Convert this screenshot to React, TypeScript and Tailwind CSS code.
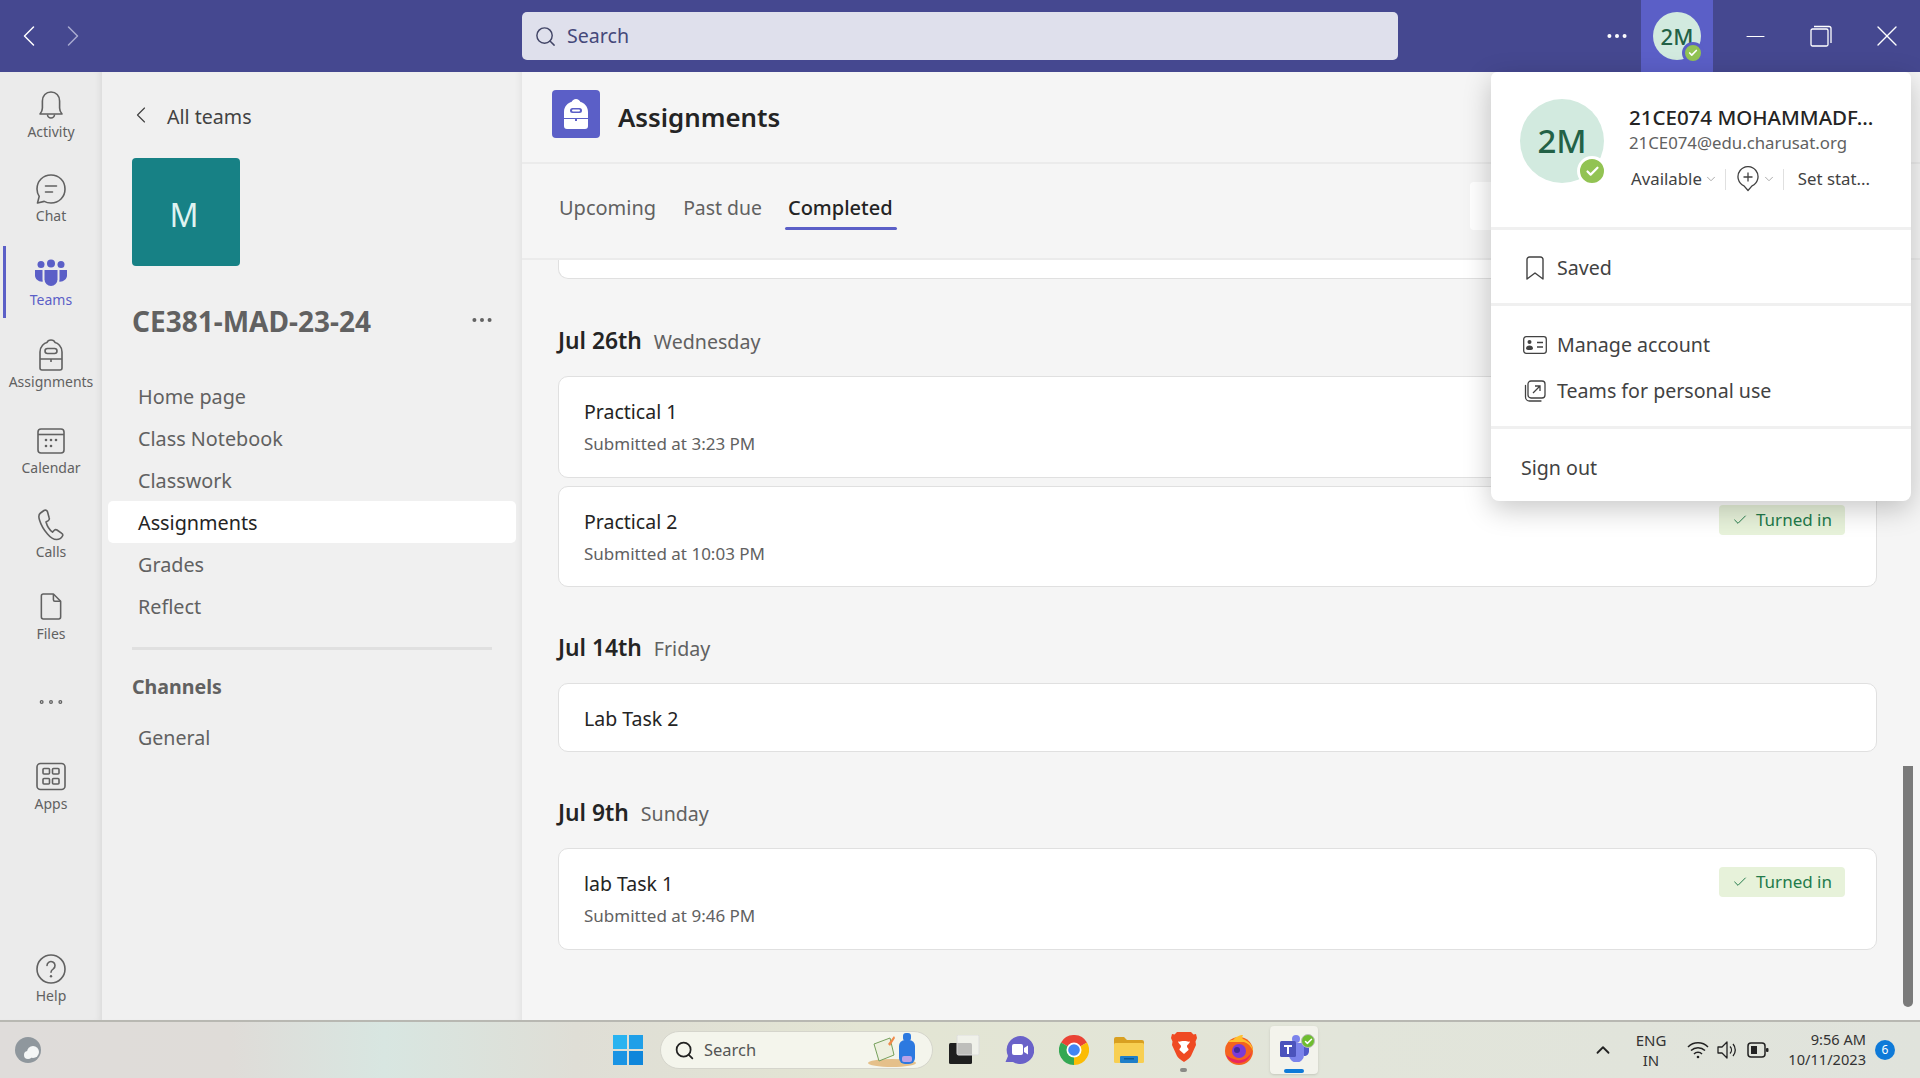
import React from "react";
import { ChevronLeft, ChevronRight, ChevronDown, ChevronUp, Search, Minus, X, Check, Ellipsis } from "lucide-react";

const stroke = "#616161";

const BellIcon = () => (
  <svg width="28" height="32" viewBox="0 0 28 32" fill="none" stroke={stroke} strokeWidth="1.6">
    <path d="M3 25c1.8-2 2.4-3.5 2.4-6v-7C5.400 6.500 9 3 14 3s8.600 3.500 8.600 9v7c0 2.500.6 4 2.400 6z" strokeLinejoin="round" />
    <path d="M10.500 25.500a3.500 3.500 0 0 0 7 0" />
  </svg>
);

const ChatIcon = () => (
  <svg width="32" height="32" viewBox="0 0 32 32" fill="none" stroke={stroke} strokeWidth="1.6">
    <path d="M16 2c8 0 14 6 14 14s-6 14-14 14c-2.500 0-4.800-.5-6.800-1.600L2.500 30l1.700-6.600A13.800 13.800 0 0 1 2 16C2 8 8 2 16 2z" strokeLinejoin="round" />
    <path d="M10.500 13h11M10.500 19h7" strokeLinecap="round" />
  </svg>
);

const TeamsIcon = () => (
  <svg width="32" height="28" viewBox="0 0 32 28" fill="#5b5fc7">
    <circle cx="16" cy="4.500" r="4" />
    <circle cx="6" cy="5.500" r="3.500" />
    <circle cx="26" cy="5.500" r="3.500" />
    <path d="M9.500 11h13v9.500a6.500 6.500 0 0 1-13 0z" />
    <path d="M0 11h7.500v9c0 1 .1 1.800.4 2.600C3.500 23 0 20 0 16.500z" />
    <path d="M32 11h-7.500v9c0 1-.1 1.800-.4 2.600 4.400.4 7.900-2.600 7.900-6.100z" />
  </svg>
);

const BagIcon = () => (
  <svg width="24" height="32" viewBox="0 0 24 32" fill="none" stroke={stroke} strokeWidth="1.6">
    <path d="M1 29V13C1 7 5.500 4 8 3.500 8.500 2 10 1 12 1s3.500 1 4 2.500C18.500 4 23 7 23 13v16a2 2 0 0 1-2 2H3a2 2 0 0 1-2-2z" strokeLinejoin="round" />
    <rect x="6" y="9.500" width="12" height="5" rx="2.500" />
    <path d="M1 20h22M12 20v3" />
  </svg>
);

const CalendarIcon = () => (
  <svg width="28" height="28" viewBox="0 0 28 28" fill="none" stroke={stroke} strokeWidth="1.6">
    <rect x="1" y="2" width="26" height="24" rx="3" />
    <path d="M1 7.500h26" />
    <g fill={stroke} stroke="none">
      <circle cx="9" cy="13" r="1.300" /><circle cx="14" cy="13" r="1.300" /><circle cx="19" cy="13" r="1.300" />
      <circle cx="9" cy="19" r="1.300" /><circle cx="14" cy="19" r="1.300" />
    </g>
  </svg>
);

const PhoneIcon = () => (
  <svg width="26" height="32" viewBox="0 0 26 32" fill="none" stroke={stroke} strokeWidth="1.6">
    <path d="M6 1.500 2.500 4C.5 5.500.5 8 1.500 11c1.500 5 4.500 10 8 14 2.500 3 5.500 5.500 9 5.500 2.500 0 5-1.500 6-3.500.5-1 .2-2-.7-2.600L19 21c-.9-.5-2-.4-2.700.3l-1.800 1.800C11.500 21 9 16.500 8 13l2.300-1.400c.9-.6 1.200-1.600.9-2.600L9.500 2.800C9.100 1.500 7.400.7 6 1.500z" strokeLinejoin="round" />
  </svg>
);

const FileIcon = () => (
  <svg width="22" height="27" viewBox="0 0 22 28" fill="none" stroke={stroke} strokeWidth="1.6">
    <path d="M3 1h10.500L21 8.500V25a2 2 0 0 1-2 2H3a2 2 0 0 1-2-2V3a2 2 0 0 1 2-2z" strokeLinejoin="round" />
    <path d="M13.500 1v6a1.500 1.500 0 0 0 1.500 1.500h6" />
  </svg>
);

const AppsIcon = () => (
  <svg width="30" height="29" viewBox="0 0 30 28" fill="none" stroke={stroke} strokeWidth="1.6">
    <rect x="1" y="1" width="28" height="26" rx="3.500" />
    <rect x="7" y="6" width="6.500" height="5.500" rx="1" />
    <rect x="16.500" y="6" width="6.500" height="5.500" rx="1" />
    <rect x="7" y="16" width="6.500" height="5.500" rx="1" />
    <rect x="16.500" y="16" width="6.500" height="5.500" rx="1" />
  </svg>
);

const HelpIcon = () => (
  <svg width="30" height="30" viewBox="0 0 30 30" fill="none" stroke={stroke} strokeWidth="1.6">
    <circle cx="15" cy="15" r="14" />
    <path d="M11 11.500a4 4 0 1 1 6.300 3.300c-1.500 1-2.300 1.700-2.300 3.400" strokeLinecap="round" />
    <circle cx="15" cy="22.300" r="1.200" fill={stroke} stroke="none" />
  </svg>
);

const railItems = [
  { label: "Activity", icon: <BellIcon /> },
  { label: "Chat", icon: <ChatIcon /> },
  { label: "Teams", icon: <TeamsIcon />, active: true },
  { label: "Assignments", icon: <BagIcon />, lift: true },
  { label: "Calendar", icon: <CalendarIcon /> },
  { label: "Calls", icon: <PhoneIcon /> },
  { label: "Files", icon: <FileIcon />, lift: true },
];

const RailItem = ({ label, icon, active, lift }: { label: string; icon: React.ReactNode; active?: boolean; lift?: boolean }) => (
  <div className={`relative flex h-[84px] flex-col items-center justify-center gap-[1px] ${lift ? "pb-[4px]" : ""}`}>
    {active && <span className="absolute left-[3px] top-[6px] h-[72px] w-[3px] bg-[#5b5fc7]" />}
    <div className="flex h-[34px] items-center">{icon}</div>
    <span className={`text-[14px] leading-[18px] ${active ? "text-[#5b5fc7]" : "text-[#616161]"}`}>{label}</span>
  </div>
);

const channelMenu = ["Home page", "Class Notebook", "Classwork", "Assignments", "Grades", "Reflect"];

const TurnedIn = () => (
  <div className="flex h-[30px] w-[126px] items-center justify-center gap-[8px] rounded-[4px] bg-[#e7f2da] text-[17px] text-[#237b4b]">
    <Check size={16} strokeWidth={1.5} />
    <span>Turned in</span>
  </div>
);

const AssignmentCard = ({ title, sub, done, className }: { title: string; sub?: string; done?: boolean; className: string }) => (
  <div className={`flex w-[1319px] justify-between rounded-[10px] border border-[#e0e0e0] bg-white pl-[25px] pr-[31px] ${className}`}>
    <div className="flex flex-col justify-center gap-[7px]">
      <p className="text-[19.500px] leading-[27px] text-[#242424]">{title}</p>
      {sub && <p className="text-[17px] leading-[24px] text-[#616161]">{sub}</p>}
    </div>
    {done && (
      <div className="pt-[18px]">
        <TurnedIn />
      </div>
    )}
  </div>
);

const DateHeading = ({ date, day, className }: { date: string; day: string; className: string }) => (
  <div className={`flex h-[35px] items-baseline gap-[12px] ${className}`}>
    <span className="text-[22.800px] font-semibold text-[#242424]">{date}</span>
    <span className="text-[19.600px] text-[#616161]">{day}</span>
  </div>
);

const PopupRow = ({ icon, label }: { icon: React.ReactNode; label: string }) => (
  <div className="flex h-[46px] items-center text-[19.600px] text-[#424242]">
    <div className="flex w-[66px] justify-center pl-[32px] pr-[10px]">{icon}</div>
    <span>{label}</span>
  </div>
);

const ProfilePopup = () => (
  <div className="absolute right-[9px] top-[72px] z-20 w-[420px] rounded-b-[8px] rounded-t-[6px] bg-white shadow-[0_8px_28px_rgba(0,0,0,0.22)]">
    <div className="flex h-[155px] pl-[29px] pt-[27px]">
      <div className="relative flex h-[84px] w-[84px] shrink-0 items-center justify-center rounded-full bg-[#d2eadf] text-[33px] font-medium text-[#236146]">
        2M
        <span className="absolute bottom-[-3px] right-[-3px] flex h-[30px] w-[30px] items-center justify-center rounded-full border-[3px] border-white bg-[#92c353]">
          <Check size={15} strokeWidth={3.500} className="text-white" />
        </span>
      </div>
      <div className="ml-[25px] flex flex-col pt-[4px]">
        <p className="text-[20.500px] font-medium leading-[28px] text-[#242424]">21CE074 MOHAMMADF...</p>
        <p className="text-[16.800px] leading-[24px] text-[#616161]">21CE074@edu.charusat.org</p>
        <div className="mt-[11px] flex items-center text-[16.800px] leading-[24px] text-[#424242]">
          <span className="pl-[2px]">Available</span>
          <ChevronDown size={14} strokeWidth={1.500} className="ml-[2px] text-[#a0a0a0]" />
          <span className="ml-[7px] h-[21px] w-px bg-[#e0e0e0]" />
          <svg width="22" height="26" viewBox="0 0 22 26" fill="none" stroke="#424242" strokeWidth="1.300" className="ml-[11px]">
            <path d="M11 24.500 7 19.800A10 10 0 1 1 15 19.800z" strokeLinejoin="round" />
            <path d="M11 6.500v9M6.500 11h9" />
          </svg>
          <ChevronDown size={14} strokeWidth={1.500} className="ml-[3px] text-[#a0a0a0]" />
          <span className="ml-[7px] h-[21px] w-px bg-[#e0e0e0]" />
          <span className="ml-[14px]">Set stat...</span>
        </div>
      </div>
    </div>
    <div className="h-[3px] bg-[#f0f0f0]" />
    <div className="flex h-[73px] items-center pt-[3px]">
      <PopupRow
        label="Saved"
        icon={
          <svg width="18" height="24" viewBox="0 0 18 24" fill="none" stroke="#424242" strokeWidth="1.400">
            <path d="M1 3.500A2.500 2.500 0 0 1 3.500 1h11A2.500 2.500 0 0 1 17 3.500V23l-8-6-8 6z" strokeLinejoin="round" />
          </svg>
        }
      />
    </div>
    <div className="h-[3px] bg-[#f0f0f0]" />
    <div className="flex h-[120px] flex-col justify-center pt-[4px]">
      <PopupRow
        label="Manage account"
        icon={
          <svg width="24" height="18" viewBox="0 0 24 18" fill="none" stroke="#424242" strokeWidth="1.300">
            <rect x=".7" y=".7" width="22.600" height="16.600" rx="2.500" />
            <circle cx="6.500" cy="6" r="2" fill="#424242" stroke="none" />
            <path d="M3 12.500c0-2 1.500-3 3.500-3s3.500 1 3.500 3-7 2-7 0z" fill="#424242" stroke="none" />
            <path d="M14 6.500h6M14 11h6" />
          </svg>
        }
      />
      <PopupRow
        label="Teams for personal use"
        icon={
          <svg width="22" height="22" viewBox="0 0 22 22" fill="none" stroke="#424242" strokeWidth="1.300">
            <rect x="4" y="1" width="17" height="17" rx="3" />
            <path d="M1.500 5.500V17a4 4 0 0 0 4 4H17" strokeLinecap="round" />
            <path d="M9 13l7-7M11 6h5v5" />
          </svg>
        }
      />
    </div>
    <div className="h-[3px] bg-[#f0f0f0]" />
    <div className="flex h-[72px] items-center pl-[30px] pt-[5px] text-[19.600px] text-[#424242]">Sign out</div>
  </div>
);

const TopBar = () => (
  <div className="flex h-[72px] shrink-0 items-center bg-[#454890]">
    <div className="flex w-[522px] items-center pl-[11px]">
      <ChevronLeft size={36} strokeWidth={1} className="text-white" />
      <ChevronRight size={36} strokeWidth={1} className="ml-[8px] text-[#a9abd0]" />
    </div>
    <div className="flex h-[48px] w-[876px] items-center gap-[10px] rounded-[5px] bg-[#dfe0ec] pl-[12px] text-[19.600px] text-[#45487a]">
      <Search size={23} strokeWidth={1.500} className="text-[#424566]" />
      <span>Search</span>
    </div>
    <div className="ml-auto flex h-full items-center">
      <Ellipsis size={26} strokeWidth={1.700} className="mr-[11px] text-white" />
      <div className="flex h-full w-[72px] items-center justify-center bg-[#5b5fc7]">
        <div className="relative flex h-[48px] w-[48px] items-center justify-center rounded-full bg-[#d2eadf] text-[22px] font-medium text-[#236146]">
          2M
          <span className="absolute bottom-[-4px] right-[-3px] flex h-[22px] w-[22px] items-center justify-center rounded-full border-[3px] border-[#5b5fc7] bg-[#92c353]">
            <Check size={10} strokeWidth={4} className="text-white" />
          </span>
        </div>
      </div>
      <div className="ml-[9px] flex w-[66px] justify-center">
        <Minus size={29} strokeWidth={1} className="text-white" />
      </div>
      <div className="flex w-[66px] justify-center">
        <svg width="22" height="22" viewBox="0 0 22 22" fill="none" stroke="#fff" strokeWidth="1.300">
          <rect x="1" y="4" width="17" height="17" rx="1.500" />
          <path d="M4 1.500h15a2 2 0 0 1 2 2V18" />
        </svg>
      </div>
      <div className="flex w-[66px] justify-center">
        <X size={36} strokeWidth={0.900} className="text-white" />
      </div>
    </div>
  </div>
);

const Rail = () => (
  <div className="flex w-[102px] shrink-0 flex-col bg-[#ebebeb] shadow-[inset_-6px_0_6px_-4px_rgba(0,0,0,0.07)]">
    {railItems.map((item) => (
      <RailItem key={item.label} {...item} />
    ))}
    <div className="flex h-[84px] items-center justify-center">
      <Ellipsis size={32} strokeWidth={1} className="text-[#616161]" />
    </div>
    <RailItem label="Apps" icon={<AppsIcon />} />
    <div className="mt-auto">
      <RailItem label="Help" icon={<HelpIcon />} />
    </div>
  </div>
);

const TeamPanel = () => (
  <div className="flex w-[420px] shrink-0 flex-col bg-[#f0f0f0] shadow-[inset_-6px_0_6px_-4px_rgba(0,0,0,0.06)]">
    <div className="flex h-[86px] items-center pl-[25px] pt-[4px] text-[19.600px] text-[#424242]">
      <ChevronLeft size={28} strokeWidth={1} className="mb-[5px]" />
      <span className="ml-[12px]">All teams</span>
    </div>
    <div className="ml-[30px] flex h-[108px] w-[108px] items-center justify-center rounded-[4px] bg-[#178185] pr-[4px] pt-[5px] text-[32px] text-[#dff3f1]">M</div>
    <div className="mt-[32px] flex items-center justify-between pl-[30px] pr-[27px]">
      <h2 className="text-[28px] font-bold leading-[46px] text-[#616161]">CE381-MAD-23-24</h2>
      <Ellipsis size={26} strokeWidth={1.700} className="mb-[3px] text-[#616161]" />
    </div>
    <div className="mt-[31px] flex flex-col px-[6px]">
      {channelMenu.map((name) => (
        <div
          key={name}
          className={`flex h-[42px] items-center rounded-[5px] pl-[30px] pt-[2px] text-[19.800px] ${name === "Assignments" ? "bg-white text-[#242424]" : "text-[#616161]"}`}
        >
          {name}
        </div>
      ))}
    </div>
    <div className="mx-[30px] mt-[20px] h-[3px] bg-[#e0e0e0]" />
    <div className="mt-[23px] pl-[30px] text-[19.600px] font-bold leading-[28px] text-[#616161]">Channels</div>
    <div className="mt-[23px] pl-[36px] text-[19.600px] leading-[28px] text-[#616161]">General</div>
  </div>
);

const MainPane = () => (
  <div className="relative flex min-w-0 flex-1 flex-col overflow-hidden bg-[#f5f5f5]">
    <div className="flex h-[92px] shrink-0 items-start gap-[18px] border-b-2 border-[#ebebeb] pl-[30px] pt-[18px]">
      <div className="flex h-[48px] w-[48px] items-center justify-center rounded-[4px] bg-[#5b5fc7]">
        <svg width="24" height="30" viewBox="0 0 24 30" fill="#fff">
          <path d="M0 27V13C0 7 4.500 3.500 7.500 3 8 1.500 10 0 12 0s4 1.500 4.500 3C19.500 3.500 24 7 24 13v14a3 3 0 0 1-3 3H3a3 3 0 0 1-3-3z" />
          <rect x="6" y="9" width="12" height="5" rx="2.500" fill="#5b5fc7" />
          <rect x="8" y="10.500" width="8" height="2" rx="1" fill="#fff" />
          <rect x="0" y="19" width="24" height="1" fill="#5b5fc7" />
          <rect x="11" y="19" width="2" height="3" fill="#5b5fc7" />
        </svg>
      </div>
      <h1 className="mt-[3px] text-[25.800px] font-semibold leading-[48px] text-[#242424]">Assignments</h1>
    </div>
    <div className="relative flex h-[96px] shrink-0 items-start gap-[27px] border-b-2 border-[#ebebeb] pl-[37px] pt-[29px] text-[20px] text-[#616161]">
      <span>Upcoming</span>
      <span className="text-[19.400px]">Past due</span>
      <span className="relative ml-[-1px] font-medium text-[#242424]">
        Completed
        <span className="absolute bottom-[-7px] left-[-3px] right-[-4px] h-[3px] rounded-full bg-[#5b5fc7]" />
      </span>
      <div className="absolute left-[948px] top-[18px] h-[48px] w-[60px] rounded-[4px] bg-white" />
    </div>
    <div className="flex flex-col px-[36px]">
      <div className="h-[19px] w-[1319px] rounded-b-[10px] border-x border-b border-[#e0e0e0] bg-white" />
      <DateHeading date="Jul 26th" day="Wednesday" className="mt-[45px]" />
      <AssignmentCard title="Practical 1" sub="Submitted at 3:23 PM" className="mt-[17px] h-[102px]" />
      <AssignmentCard title="Practical 2" sub="Submitted at 10:03 PM" done className="mt-[8px] h-[101px]" />
      <DateHeading date="Jul 14th" day="Friday" className="mt-[44px]" />
      <AssignmentCard title="Lab Task 2" className="mt-[17px] h-[69px] pt-[2px]" />
      <DateHeading date="Jul 9th" day="Sunday" className="mt-[44px]" />
      <AssignmentCard title="lab Task 1" sub="Submitted at 9:46 PM" done className="mt-[17px] h-[102px]" />
    </div>
    <div className="absolute bottom-[13px] right-[7px] h-[241px] w-[10px] rounded-b-full bg-[#7a7a7a]" />
  </div>
);

const Taskbar = () => (
  <div className="flex h-[58px] shrink-0 items-center border-t-2 border-[#b8b8b2] bg-[linear-gradient(90deg,#dfdcda_0%,#dfdcd8_12%,#d8e6e1_20%,#dfded6_30%,#e3e5d3_45%,#e2e5da_70%,#e0e3dc_100%)]">
    <svg width="28" height="28" viewBox="0 0 28 28" className="ml-[14px]">
      <circle cx="14" cy="14" r="13" fill="#8f979d" />
      <circle cx="19" cy="16" r="6" fill="#f4f6f6" />
      <circle cx="14" cy="19" r="4" fill="#f4f6f6" />
    </svg>
    <svg width="30" height="30" viewBox="0 0 30 30" className="ml-[571px]">
      <rect x="0" y="0" width="14" height="14" fill="#29b3f0" />
      <rect x="16" y="0" width="14" height="14" fill="#1f9fe8" />
      <rect x="0" y="16" width="14" height="14" fill="#1a94e4" />
      <rect x="16" y="16" width="14" height="14" fill="#0f86db" />
    </svg>
    <div className="ml-[17px] flex h-[38px] w-[273px] items-center rounded-full border border-[#d5d5cc] bg-[#f4f5ec] pl-[13px] text-[16.500px] text-[#555]">
      <Search size={21} strokeWidth={2} className="text-[#222]" />
      <span className="ml-[9px]">Search</span>
      <svg width="62" height="36" viewBox="0 0 62 36" className="ml-auto mr-[6px]">
        <ellipse cx="28" cy="31" rx="24" ry="4" fill="#e5c08a" />
        <path d="M10 12 26 6l4 17-15 6z" fill="#eef0df" stroke="#76a05c" />
        <path d="M24 12l6-8 1 2-5 8z" fill="#f08a4a" />
        <rect x="35" y="8" width="16" height="24" rx="6" fill="#2c79e0" />
        <rect x="39" y="1" width="8" height="8" rx="3" fill="#2c79e0" />
        <rect x="38" y="24" width="10" height="6" rx="2" fill="#b9a2e8" />
      </svg>
    </div>
    <svg width="32" height="30" viewBox="0 0 32 30" className="ml-[16px]">
      <rect x="0" y="8" width="23" height="21" rx="1.500" fill="#1f1f1f" />
      <rect x="8" y="0" width="22" height="20" rx="1.500" fill="#f4f4f0" fillOpacity="0.75" stroke="#ddd" />
    </svg>
    <svg width="30" height="30" viewBox="0 0 30 30" className="ml-[23px]">
      <path d="M16 1a14 14 0 1 1-7 26H1.500l2.500-6A14 14 0 0 1 16 1z" fill="#6a62c9" />
      <rect x="8" y="9" width="11" height="11" rx="2" fill="#fff" />
      <path d="m20 13 4-2.500v9L20 17z" fill="#fff" />
    </svg>
    <svg width="30" height="30" viewBox="0 0 30 30" className="ml-[25px]">
      <path d="M15 15 2 7.500A15 15 0 0 1 28 7.500z" fill="#ea4335" />
      <path d="M15 15 2 7.500A15 15 0 0 0 15 30z" fill="#34a853" />
      <path d="M15 15 28 7.500A15 15 0 0 1 15 30z" fill="#fbbc05" />
      <circle cx="15" cy="15" r="7.500" fill="#fff" />
      <circle cx="15" cy="15" r="5.800" fill="#4285f4" />
    </svg>
    <svg width="30" height="28" viewBox="0 0 30 28" className="ml-[25px]">
      <path d="M0 3a2 2 0 0 1 2-2h8l3 3h15a2 2 0 0 1 2 2v5H0z" fill="#d9a021" />
      <rect x="0" y="7" width="30" height="20" rx="1.500" fill="#f8cf52" />
      <rect x="6" y="20" width="18" height="7" rx="1" fill="#1f7fc9" />
      <rect x="10" y="22" width="10" height="1.500" fill="#0d5a94" />
    </svg>
    <div className="relative ml-[27px] flex h-[44px] w-[26px] items-start pt-[4px]">
      <svg width="26" height="30" viewBox="0 0 26 30">
        <path d="M6 0h14l2.500 2.500L25 2l1 4-1.500 3.500L25 13l-5 11c-1 2-4 4-7 6-3-2-6-4-7-6L1 13l.5-3.500L0 6l1-4 2.500.5z" fill="#ef4a23" />
        <path d="M13 9c3 0 4 1 6 .5-1 3-3 3-3 5 0 1.500 2 2 1.500 3.500L13 22l-4.500-4c-.5-1.500 1.500-2 1.500-3.500 0-2-2-2-3-5C9 10 10 9 13 9z" fill="#fff" />
      </svg>
      <span className="absolute bottom-0 left-[9px] h-[4px] w-[7px] rounded-full bg-[#8a8a86]" />
    </div>
    <svg width="30" height="30" viewBox="0 0 30 30" className="ml-[27px]">
      <circle cx="15" cy="16" r="14" fill="#f4631f" />
      <path d="M4 7C6 5 7 5 9 5c2-3 7-5 10-5-1 2-1 3 0 4 5 2 10 6 10 12-2-5-5-8-9-9z" fill="#ffbf2c" />
      <path d="M2 20c3 7 11 10 18 7 4-2 7-6 8-11-3 7-9 10-15 9-5-1-8-3-11-5z" fill="#e8265e" />
      <circle cx="15" cy="16" r="7" fill="#7b3bd6" />
      <circle cx="13" cy="15" r="3" fill="#3f2a9c" />
    </svg>
    <div className="relative ml-[16px] flex h-[48px] w-[48px] items-center justify-center rounded-[4px] bg-[#f3f3ec] pb-[4px] shadow-sm">
      <svg width="30" height="28" viewBox="0 0 30 28">
        <circle cx="17" cy="5" r="4" fill="#7b83eb" />
        <path d="M10 9h15v12a7.500 7.500 0 0 1-15 0z" fill="#7b83eb" />
        <path d="M25 9h5v8c0 3-2 5-5 5z" fill="#5059c9" />
        <rect x="1" y="7" width="16" height="16" rx="1.500" fill="#4b53bc" />
        <path d="M5 11h8v2h-3v7H8v-7H5z" fill="#fff" />
      </svg>
      <span className="absolute right-[3px] top-[8px] flex h-[14px] w-[14px] items-center justify-center rounded-full border border-[#bbb] bg-[#6ebd2f]">
        <Check size={9} strokeWidth={4} className="text-white" />
      </span>
      <span className="absolute bottom-[1px] left-[14px] h-[4px] w-[20px] rounded-full bg-[#0f7ad8]" />
    </div>
    <ChevronUp size={22} strokeWidth={2} className="ml-[274px] text-[#222]" />
    <div className="ml-[17px] flex w-[40px] flex-col items-center text-[15px] leading-[20px] text-[#333]">
      <span>ENG</span>
      <span>IN</span>
    </div>
    <svg width="22" height="18" viewBox="0 0 22 18" fill="none" stroke="#222" strokeWidth="1.500" className="ml-[16px]">
      <path d="M1 6a14 14 0 0 1 20 0M4 9.500a10 10 0 0 1 14 0M7 13a5.500 5.500 0 0 1 8 0" />
      <circle cx="11" cy="16" r="1.300" fill="#222" stroke="none" />
    </svg>
    <svg width="22" height="20" viewBox="0 0 22 20" fill="none" stroke="#222" strokeWidth="1.300" className="ml-[8px]">
      <path d="M1 7h4l5-5v16l-5-5H1z" strokeLinejoin="round" />
      <path d="M13 6.500a5 5 0 0 1 0 7M16 4a9 9 0 0 1 0 12" />
    </svg>
    <svg width="22" height="16" viewBox="0 0 22 16" className="ml-[8px]">
      <rect x="1" y="1" width="17" height="14" rx="3" fill="none" stroke="#222" strokeWidth="1.500" />
      <rect x="4" y="4" width="6" height="8" fill="#222" />
      <rect x="19" y="6" width="2.500" height="4" rx="1" fill="#222" />
    </svg>
    <div className="mb-[2px] ml-[10px] flex w-[87px] flex-col items-end text-[14.600px] leading-[20px] text-[#333]">
      <span>9:56 AM</span>
      <span>10/11/2023</span>
    </div>
    <span className="ml-[9px] flex h-[20px] w-[20px] items-center justify-center rounded-full bg-[#0f7ad8] text-[12px] text-white">6</span>
  </div>
);

export default function App() {
  return (
    <div className="relative flex h-[1078px] w-[1920px] flex-col overflow-hidden bg-[#f5f5f5] font-['Noto_Sans','Open_Sans',sans-serif]">
      <TopBar />
      <div className="flex min-h-0 flex-1">
        <Rail />
        <TeamPanel />
        <MainPane />
      </div>
      <Taskbar />
      <ProfilePopup />
    </div>
  );
}
